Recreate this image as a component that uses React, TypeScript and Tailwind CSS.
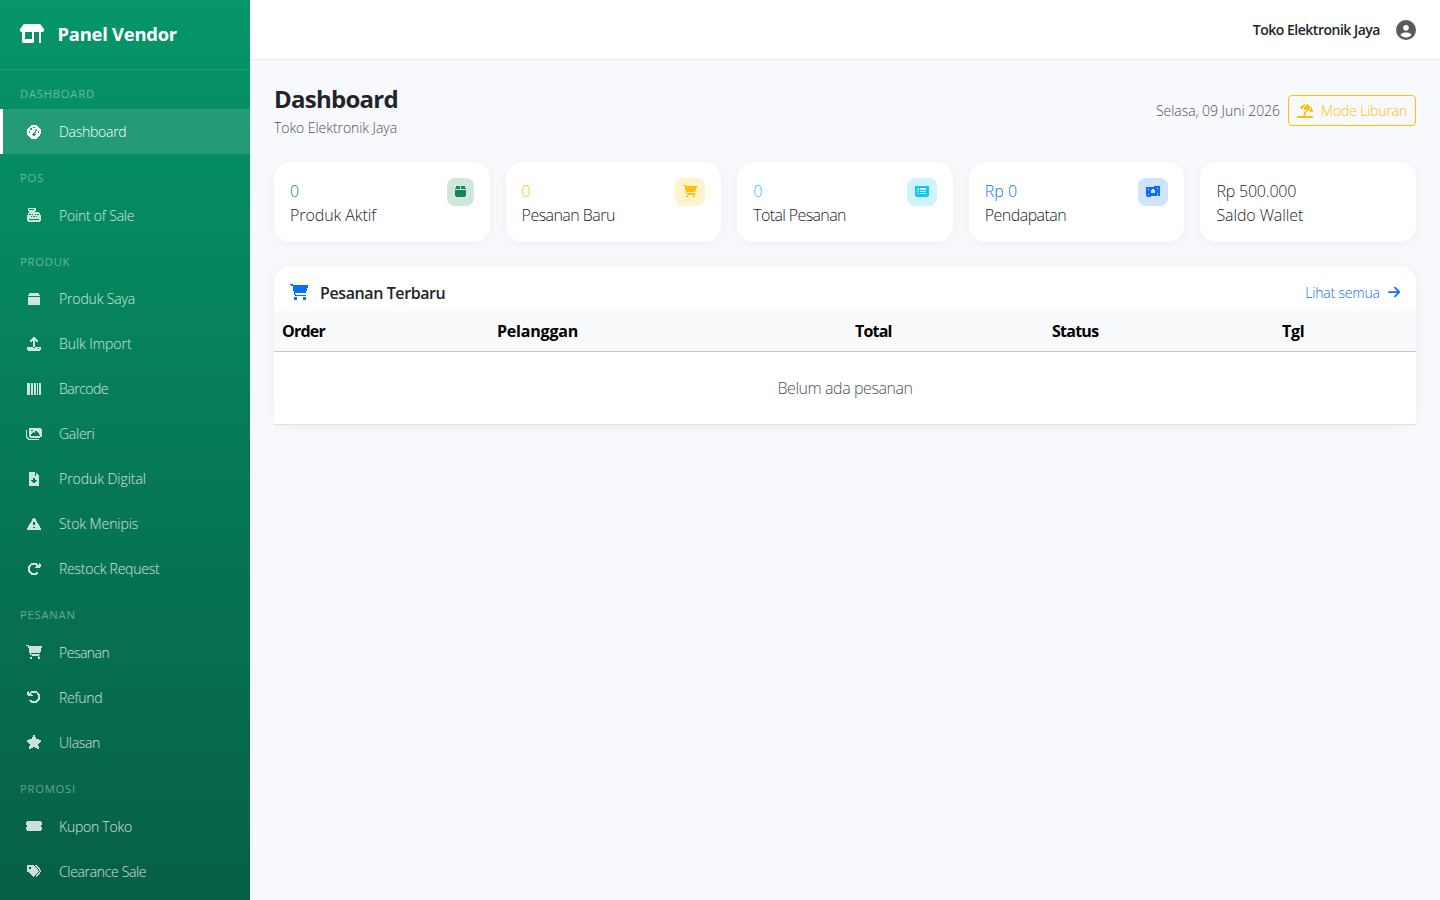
import type { ComponentType, SVGProps } from "react"
import {
  FaArrowRight,
  FaArrowRotateLeft,
  FaArrowRotateRight,
  FaBox,
  FaCartShopping,
  FaCashRegister,
  FaCircleUser,
  FaFileArrowDown,
  FaGaugeHigh,
  FaImages,
  FaMoneyBillWave,
  FaRectangleList,
  FaStar,
  FaTags,
  FaTicketSimple,
  FaTriangleExclamation,
  FaUmbrellaBeach,
  FaUpload
} from "react-icons/fa6"

type Icon = ComponentType<SVGProps<SVGSVGElement>>

interface MenuItem {
  label: string
  icon: Icon
  tracking: string
  active?: boolean
}

interface MenuSection {
  title: string
  items: MenuItem[]
}

interface Stat {
  value: string
  label: string
  tracking: string
  valueClass: string
  tileClass?: string
  iconClass?: string
  icon?: Icon
}

function ShopIcon(props: SVGProps<SVGSVGElement>) {
  return (
    <svg viewBox="0 0 24 19" fill="currentColor" {...props}>
      <path d="M4 0h16l1 1 2 3 1 1v2l-1 1H1L0 7V5l1-1 2-3z" />
      <path d="M2 8h3v7h7V8h2v10l-1 1H3l-1-1z" />
      <path d="M19 8h2v11h-2z" />
    </svg>
  )
}

function BarcodeIcon(props: SVGProps<SVGSVGElement>) {
  return (
    <svg viewBox="-1 -1 16 14" fill="currentColor" {...props}>
      <path d="M0 0h3v12H0zM4 0h2v12H4zM7 0h2v12H7zM10 0h1v12h-1zM12 0h2v12h-2z" />
    </svg>
  )
}

const menu: MenuSection[] = [
  {
    title: "Dashboard",
    items: [{ label: "Dashboard", icon: FaGaugeHigh, tracking: "tracking-[-0.27px]", active: true }]
  },
  { title: "POS", items: [{ label: "Point of Sale", icon: FaCashRegister, tracking: "tracking-[-0.22px]" }] },
  {
    title: "Produk",
    items: [
      { label: "Produk Saya", icon: FaBox, tracking: "tracking-[-0.15px]" },
      { label: "Bulk Import", icon: FaUpload, tracking: "tracking-[-0.06px]" },
      { label: "Barcode", icon: BarcodeIcon, tracking: "tracking-[-0.5px]" },
      { label: "Galeri", icon: FaImages, tracking: "tracking-[-0.27px]" },
      { label: "Produk Digital", icon: FaFileArrowDown, tracking: "tracking-[-0.05px]" },
      { label: "Stok Menipis", icon: FaTriangleExclamation, tracking: "tracking-[-0.08px]" },
      { label: "Restock Request", icon: FaArrowRotateRight, tracking: "tracking-[-0.24px]" }
    ]
  },
  {
    title: "Pesanan",
    items: [
      { label: "Pesanan", icon: FaCartShopping, tracking: "tracking-[-0.5px]" },
      { label: "Refund", icon: FaArrowRotateLeft, tracking: "tracking-[-0.3px]" },
      { label: "Ulasan", icon: FaStar, tracking: "tracking-[-0.3px]" }
    ]
  },
  {
    title: "Promosi",
    items: [
      { label: "Kupon Toko", icon: FaTicketSimple, tracking: "tracking-[-0.25px]" },
      { label: "Clearance Sale", icon: FaTags, tracking: "tracking-[-0.34px]" }
    ]
  }
]

const stats: Stat[] = [
  {
    value: "0",
    label: "Produk Aktif",
    tracking: "tracking-[-0.08px]",
    valueClass: "text-[#198754]",
    tileClass: "bg-[#d1e7dd] text-[#198754]",
    iconClass: "w-[11px]",
    icon: FaBox
  },
  {
    value: "0",
    label: "Pesanan Baru",
    tracking: "tracking-[-0.55px]",
    valueClass: "text-[#ffc107]",
    tileClass: "bg-[#fff3cd] text-[#ffc107]",
    iconClass: "w-[14px]",
    icon: FaCartShopping
  },
  {
    value: "0",
    label: "Total Pesanan",
    tracking: "tracking-[-0.63px]",
    valueClass: "text-[#0dcaf0]",
    tileClass: "bg-[#cff4fc] text-[#0dcaf0]",
    iconClass: "w-[14px]",
    icon: FaRectangleList
  },
  {
    value: "Rp 0",
    label: "Pendapatan",
    tracking: "tracking-[-0.55px]",
    valueClass: "text-[#0d6efd]",
    tileClass: "bg-[#cfe2ff] text-[#0d6efd]",
    iconClass: "w-[14px]",
    icon: FaMoneyBillWave
  },
  {
    value: "Rp 500.000",
    label: "Saldo Wallet",
    tracking: "tracking-[-0.1px]",
    valueClass: "text-[#212529] tracking-[-0.2px]"
  }
]

function Sidebar() {
  return (
    <aside className="w-[250px] shrink-0 h-full overflow-hidden bg-gradient-to-b from-[#059669] to-[#065f46] text-white">
      <div className="h-[70px] flex items-center gap-[13.5px] px-5 pb-[2px] border-b border-white/10">
        <ShopIcon className="w-6 h-[19px] shrink-0" />
        <span className="text-[18.4px] font-bold tracking-[-0.24px]">Panel Vendor</span>
      </div>

      <nav className="pt-[0.4px]">
        {menu.map((section) => (
          <div key={section.title}>
            <div className="h-[38.65px] px-5 pt-[15px] text-[11.2px] leading-[17px] font-normal uppercase tracking-[0.8px] text-white/40">
              {section.title}
            </div>
            {section.items.map((item) => (
              <a
                key={item.label}
                className={
                  item.active
                    ? "h-[45px] flex items-center gap-3.5 pl-5 border-l-[3px] border-white bg-white/12 text-white"
                    : "h-[45px] flex items-center gap-3.5 pl-5 border-l-[3px] border-transparent text-white/80"
                }
              >
                <span className="w-[22px] flex justify-center">
                  <item.icon className="h-3.5 w-4" shapeRendering="crispEdges" />
                </span>
                <span className={`pt-px text-sm ${item.tracking}`}>{item.label}</span>
              </a>
            ))}
          </div>
        ))}
      </nav>
    </aside>
  )
}

function StatCard({ stat }: { stat: Stat }) {
  const Icon = stat.icon
  return (
    <div className="h-20 p-4 flex justify-between items-start bg-white rounded-2xl shadow-[0_2px_12px_rgba(0,0,0,0.04)]">
      <div className="pt-px leading-6">
        <div className={stat.valueClass}>{stat.value}</div>
        <div className={stat.tracking}>{stat.label}</div>
      </div>
      {Icon && (
        <div className={`h-7 px-2 pb-0.5 flex items-center rounded-lg ${stat.tileClass}`}>
          <Icon className={`h-[12.8px] ${stat.iconClass}`} shapeRendering="crispEdges" />
        </div>
      )}
    </div>
  )
}

export default function App() {
  return (
    <div className="h-screen flex overflow-hidden bg-[#f8f9fd] text-[#212529] font-light font-['Open_Sans','Noto_Sans',sans-serif]">
      <Sidebar />

      <div className="flex-1 min-w-0">
        {/* Topbar */}
        <header className="h-[60px] px-6 flex items-center justify-end gap-4 bg-white border-b border-[#eeeeee]">
          <span className="text-sm font-semibold tracking-[-0.49px]">Toko Elektronik Jaya</span>
          <FaCircleUser className="size-5 text-[#565b60]" />
        </header>

        <main className="p-6">
          {/* Page title */}
          <div className="flex items-center justify-between">
            <div>
              <h1 className="pt-px text-2xl leading-[28.8px] font-bold tracking-[-0.75px]">Dashboard</h1>
              <p className="pt-1 text-sm leading-5 tracking-[-0.07px] text-[#4d5257]">Toko Elektronik Jaya</p>
            </div>
            <div className="flex items-center gap-2">
              <span className="pt-px text-sm tracking-[-0.04px] text-[#4d5257]">Selasa, 09 Juni 2026</span>
              <button className="h-[31px] w-32 px-2 flex items-center gap-2 border border-[#ffc107] rounded text-sm tracking-[-0.15px] text-[#ffc107] whitespace-nowrap">
                <FaUmbrellaBeach className="w-4 h-3.5 shrink-0" shapeRendering="crispEdges" />
                <span className="pt-px">Mode Liburan</span>
              </button>
            </div>
          </div>

          {/* Stats */}
          <div className="mt-[24.2px] grid grid-cols-5 gap-4">
            {stats.map((stat) => (
              <StatCard key={stat.label} stat={stat} />
            ))}
          </div>

          {/* Latest orders */}
          <div className="mt-6 rounded-2xl bg-white shadow-[0_2px_12px_rgba(0,0,0,0.06)]">
            <div className="h-[45px] px-4 pt-4 pb-2 flex items-center justify-between">
              <div className="flex items-center gap-3">
                <FaCartShopping className="w-[18px] h-4 text-[#0d6efd]" shapeRendering="crispEdges" />
                <h2 className="pt-px font-semibold tracking-[-0.4px]">Pesanan Terbaru</h2>
              </div>
              <a className="flex items-center gap-2 text-sm tracking-[-0.2px] text-[#0d6efd]">
                <span className="pt-px">Lihat semua</span>
                <FaArrowRight className="w-[12.25px] h-3.5" />
              </a>
            </div>
            <table className="w-full table-fixed border-collapse bg-white">
              <thead>
                <tr className="h-[41px] bg-[#f8f9fa] text-left text-black border-b border-[#c6c7c8]">
                  <th className="w-[215px] px-2 font-bold tracking-[-0.8px]">Order</th>
                  <th className="w-[358px] px-2 font-bold tracking-[-0.2px]">Pelanggan</th>
                  <th className="w-[197px] px-2 font-bold tracking-[-0.8px]">Total</th>
                  <th className="w-[230px] px-2 font-bold tracking-[-0.75px]">Status</th>
                  <th className="w-[142px] px-2 font-bold tracking-[-0.3px]">Tgl</th>
                </tr>
              </thead>
              <tbody>
                <tr className="h-[73px] border-b border-[#dee2e6]">
                  <td colSpan={5} className="text-center tracking-[-0.43px] text-[#4d5257]">
                    Belum ada pesanan
                  </td>
                </tr>
              </tbody>
            </table>
          </div>
        </main>
      </div>
    </div>
  )
}
